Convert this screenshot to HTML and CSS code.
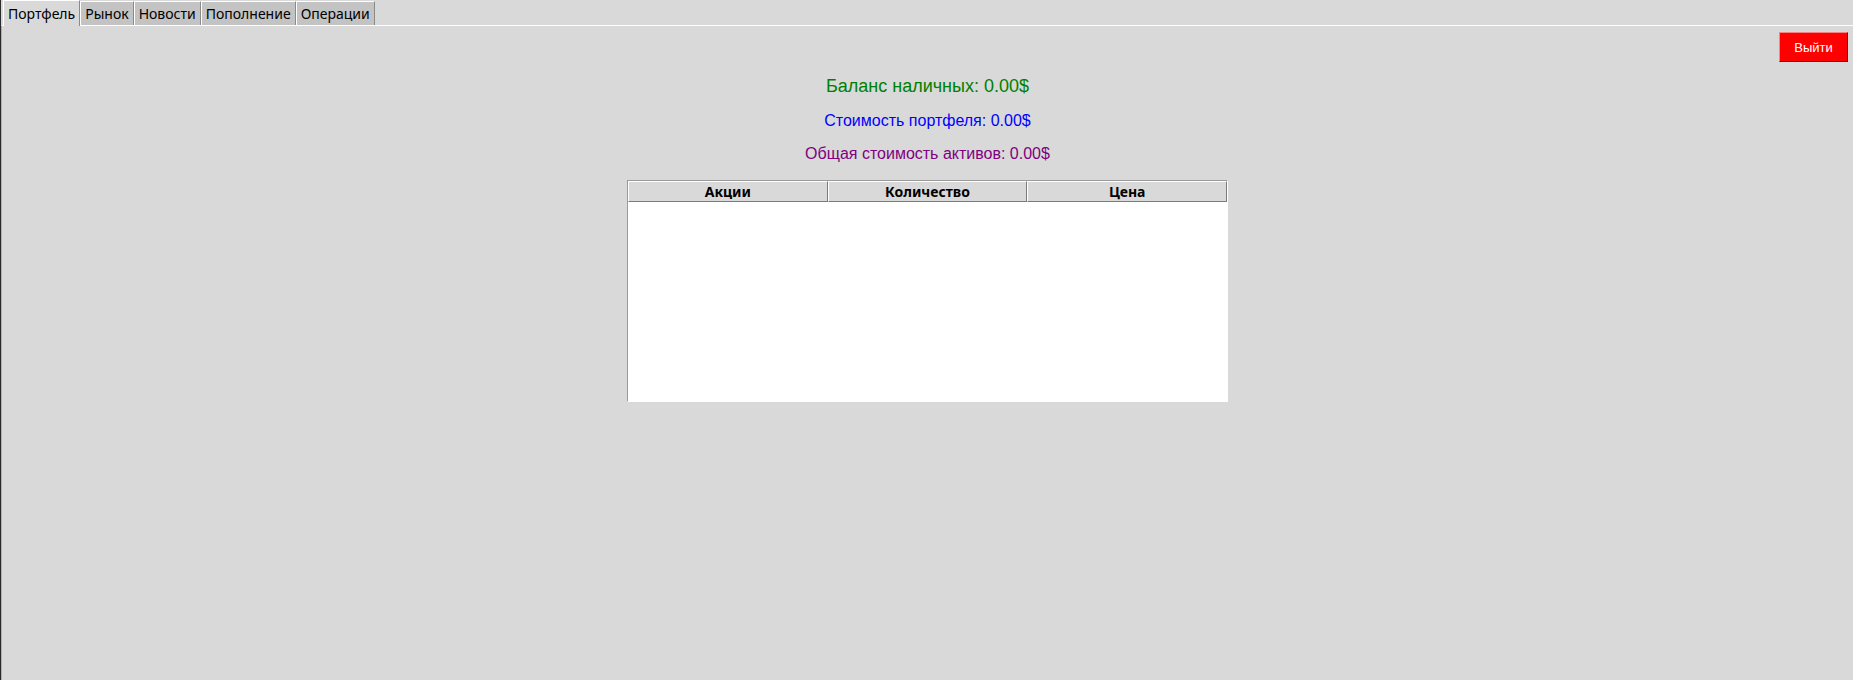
FILE: index.html
```html
<!DOCTYPE html>
<html lang="ru">
<head>
<meta charset="utf-8">
<title>Портфель</title>
<link rel="stylesheet" href="styles.css">
</head>
<body>
<div class="window">
  <div class="tabs">
    <div class="tab active">Портфель</div>
    <div class="tab">Рынок</div>
    <div class="tab">Новости</div>
    <div class="tab">Пополнение</div>
    <div class="tab">Операции</div>
  </div>
  <div class="pane">
    <div class="toprow">
      <button class="logout">Выйти</button>
    </div>
    <div class="label balance">Баланс наличных: 0.00$</div>
    <div class="label portfolio">Стоимость портфеля: 0.00$</div>
    <div class="label total">Общая стоимость активов: 0.00$</div>
    <div class="tree">
      <div class="thead">
        <div class="th">Акции</div>
        <div class="th">Количество</div>
        <div class="th">Цена</div>
      </div>
      <div class="tbody"></div>
    </div>
  </div>
</div>
</body>
</html>
```

FILE: styles.css
```css
html, body {
  margin: 0;
  padding: 0;
  height: 100%;
  background: #d9d9d9;
}
.window {
  height: 680px;
  display: flex;
  flex-direction: column;
  border-left: 1px solid #2a2a2a;
  box-sizing: border-box;
  font-family: "Noto Sans", "DejaVu Sans", sans-serif;
}
.tabs {
  display: flex;
  align-items: flex-end;
  height: 25px;
  padding-left: 2px;
  position: relative;
  z-index: 1;
}
.tab {
  height: 24px;
  line-height: 23px;
  padding: 0 4px;
  font-size: 14px;
  color: #000;
  background: #c3c3c3;
  border-left: 1px solid #ffffff;
  border-top: 1px solid #ffffff;
  border-right: 1px solid #8a8a8a;
  box-sizing: border-box;
}
.tab.active {
  height: 26px;
  line-height: 25px;
  background: #d9d9d9;
  margin-bottom: -1px;
  padding: 0 4px 0 4px;
}
.pane {
  flex: 1;
  border-top: 1px solid #ffffff;
  border-left: 1px solid #b0b0b0;
  display: flex;
  flex-direction: column;
  align-items: center;
}
.toprow {
  align-self: stretch;
  display: flex;
  justify-content: flex-end;
  padding: 6px 5px 0 0;
}
.logout {
  width: 69px;
  height: 30px;
  background: #ff0000;
  color: #ffffff;
  font-family: "Liberation Sans", Arial, sans-serif;
  font-size: 13px;
  border: 1px solid;
  border-color: #ff8080 #a00000 #a00000 #ff8080;
  padding: 0;
  margin: 0;
}
.label {
  font-family: "Liberation Sans", Arial, sans-serif;
  line-height: 1.15;
}
.balance {
  font-size: 18px;
  color: #008000;
  margin-top: 14px;
}
.portfolio {
  font-size: 16px;
  color: #0000ff;
  margin-top: 15px;
}
.total {
  font-size: 16px;
  color: #800080;
  margin-top: 15px;
}
.tree {
  margin-top: 17px;
  width: 601px;
  height: 222px;
  display: flex;
  flex-direction: column;
  border-left: 1px solid #9a9a9a;
  border-top: 1px solid #9a9a9a;
  border-right: 1px solid #ffffff;
  border-bottom: 1px solid #ffffff;
  box-sizing: border-box;
  background: #ffffff;
}
.thead {
  display: flex;
  height: 21px;
  background: #d9d9d9;
}
.th {
  flex: 1;
  box-sizing: border-box;
  border-left: 1px solid #ffffff;
  border-top: 1px solid #ffffff;
  border-right: 1px solid #7a7a7a;
  border-bottom: 1px solid #7a7a7a;
  font-size: 14px;
  font-weight: bold;
  text-align: center;
  line-height: 19px;
  color: #000;
}
.tbody {
  flex: 1;
  background: #ffffff;
}
```
